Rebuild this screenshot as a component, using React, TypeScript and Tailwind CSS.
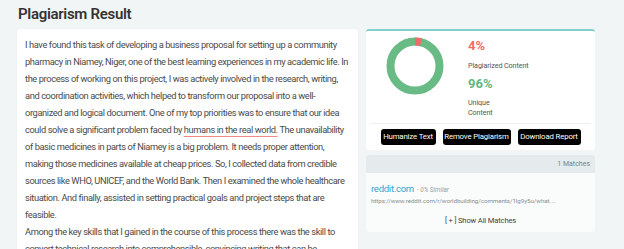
import type { ReactNode } from "react";

const lines: ReactNode[] = [
  "I have found this task of developing a business proposal for setting up a community",
  "pharmacy in Niamey, Niger, one of the best learning experiences in my academic life. In",
  "the process of working on this project, I was actively involved in the research, writing,",
  "and coordination activities, which helped to transform our proposal into a well-",
  "organized and logical document. One of my top priorities was to ensure that our idea",
  <>
    could solve a significant problem faced by{" "}
    <span className="underline decoration-[#f08a8a] underline-offset-[3px]">humans in the real world.</span> The
    unavailability
  </>,
  "of basic medicines in parts of Niamey is a big problem. It needs proper attention,",
  "making those medicines available at cheap prices. So, I collected data from credible",
  "sources like WHO, UNICEF, and the World Bank. Then I examined the whole healthcare",
  "situation. And finally, assisted in setting practical goals and project steps that are",
  "feasible.",
  "Among the key skills that I gained in the course of this process there was the skill to",
  "convert technical research into comprehensible, convincing writing that can be",
  "understood by everyone.",
];

function Donut() {
  const r = 24.5;
  const c = 2 * Math.PI * r;
  return (
    <svg width="58" height="58" viewBox="0 0 58 58">
      <circle cx="29" cy="29" r={r} fill="none" stroke="#68bb84" strokeWidth="8" />
      <circle
        cx="29"
        cy="29"
        r={r}
        fill="none"
        stroke="#f26b6b"
        strokeWidth="8"
        strokeDasharray={`${c * 0.04} ${c}`}
        transform="rotate(-90 29 29)"
      />
    </svg>
  );
}

const buttons = [
  { label: "Humanize Text", w: "w-[55px]" },
  { label: "Remove Plagiarism", w: "w-[68px]" },
  { label: "Download Report", w: "w-[63px]" },
];

export default function App() {
  return (
    <div className="h-[249px] w-[624px] overflow-hidden bg-[#f2f5f6] font-['Roboto',sans-serif]">
      <h1 className="pl-[18px] pt-[2px] text-[15px] font-semibold leading-[24px] tracking-[-0.3px] text-[#333]">
        Plagiarism Result
      </h1>
      <div className="mt-[3px] flex items-start gap-[8px] pl-[17px]">
        <div className="h-[240px] w-[341px] overflow-hidden rounded-[3px] bg-white px-[8px] pt-[7px] shadow-[0_0_2px_rgba(0,0,0,0.06)]">
          <div className="text-[9.3px] leading-[17px] tracking-[-0.4px] text-[#4a4a4a]">
            {lines.map((line, i) => (
              <div key={i} className="whitespace-nowrap">
                {line}
              </div>
            ))}
          </div>
        </div>

        <div className="flex w-[229px] flex-col gap-[5px]">
          <div className="rounded-[3px] border-t-2 border-[#7fd1cb] bg-white px-[5px] pb-[5px]">
            <div className="flex gap-[24px] pl-[15px] pt-[5px]">
              <div className="pt-[1px]">
                <Donut />
              </div>
              <div className="pt-[2px] text-[#555]">
                <div className="text-[13px] font-bold leading-[16px] text-[#f26b6b]">4%</div>
                <div className="mt-[7px] whitespace-nowrap text-[7.2px] leading-[10px] tracking-[-0.1px]">
                  Plagiarized Content
                </div>
                <div className="mt-[5px] text-[13px] font-bold leading-[16px] text-[#5fb87e]">96%</div>
                <div className="mt-[6px] w-[34px] text-[7.2px] leading-[10px] tracking-[-0.1px]">Unique Content</div>
              </div>
            </div>
            <div className="mt-[5px] border-t border-[#eceff0]" />
            <div className="mt-[5px] flex justify-center gap-[7px]">
              {buttons.map((b) => (
                <button
                  key={b.label}
                  className={`${b.w} h-[16px] whitespace-nowrap rounded-[3px] bg-black text-[7.8px] tracking-[-0.15px] text-white`}
                >
                  {b.label}
                </button>
              ))}
            </div>
          </div>

          <div className="overflow-hidden rounded-[3px] bg-[#fafbfb]">
            <div className="flex h-[18px] items-center justify-end bg-[#e5eaec] pr-[5px] text-[7px] text-[#7a8488]">
              1 Matches
            </div>
            <div className="px-[5px] pb-[6px] pt-[9px]">
              <div className="flex items-baseline gap-[3px]">
                <span className="text-[9.6px] leading-[13px] tracking-[-0.3px] text-[#3ba4cf]">reddit.com</span>
                <span className="text-[6.4px] italic text-[#9aa0a3]">- 0% Similar</span>
              </div>
              <div className="mt-[1px] text-[6.2px] leading-[9px] tracking-[-0.05px] text-[#8a8f92]">
                https://www.reddit.com/r/worldbuilding/comments/1lg9y5u/what....
              </div>
              <div className="mt-[9px] text-center text-[7.6px] leading-[11px] tracking-[-0.15px] text-[#444]">
                [ + ] Show All Matches
              </div>
            </div>
          </div>
        </div>
      </div>
    </div>
  );
}
